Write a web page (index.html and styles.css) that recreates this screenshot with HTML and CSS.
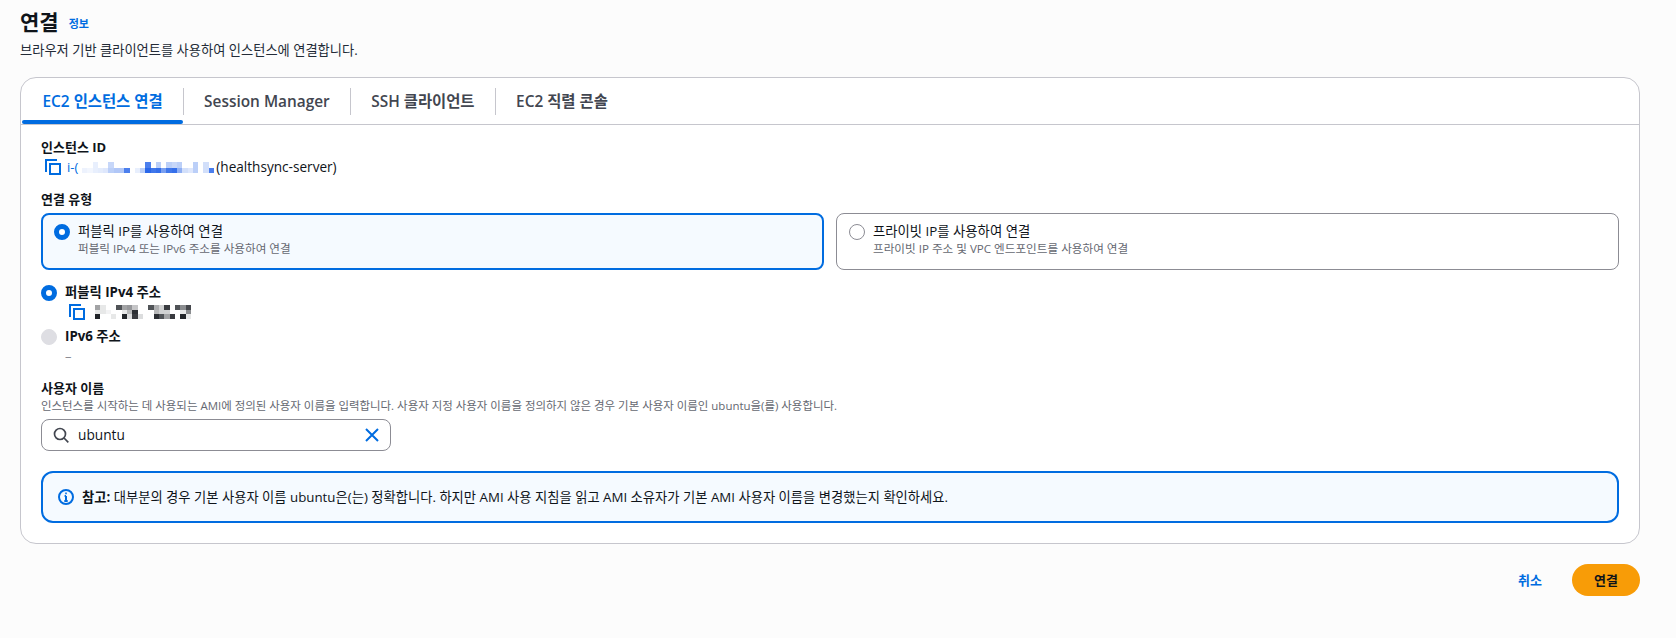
FILE: index.html
```html
<!DOCTYPE html>
<html lang="ko">
<head>
<meta charset="utf-8">
<title>연결</title>
<link rel="stylesheet" href="styles.css">
</head>
<body>
<main class="page">
  <header class="head">
    <div class="title-row"><h1>연결</h1><a class="info">정보</a></div>
    <p class="subtitle">브라우저 기반 클라이언트를 사용하여 인스턴스에 연결합니다.</p>
  </header>
  <section class="card">
    <nav class="tabs">
      <a class="tab active">EC2 인스턴스 연결</a>
      <a class="tab">Session Manager</a>
      <a class="tab">SSH 클라이언트</a>
      <a class="tab last">EC2 직렬 콘솔</a>
    </nav>
    <div class="body">
      <div class="field-id">
        <div class="label">인스턴스 ID</div>
        <div class="copy-row">
          <svg class="copy" viewBox="0 0 16 16"><path d="M1 13V1h11"/><rect x="5" y="5" width="10" height="10"/></svg>
          <span class="link">i-(</span>
          <svg class="mask mask-id" viewBox="0 0 25 2" preserveAspectRatio="none" shape-rendering="crispEdges">
            <g fill="#1f5fe8">
              <rect x="2" y="0" width="1" height="1" opacity=".1"/><rect x="5" y="0" width="1" height="1" opacity=".25"/><rect x="12" y="0" width="1" height="1" opacity=".8"/>
              <rect x="14" y="0" width="1" height="1" opacity=".3"/><rect x="16" y="0" width="1" height="1" opacity=".3"/><rect x="17" y="0" width="1" height="1" opacity=".25"/>
              <rect x="18" y="0" width="1" height="1" opacity=".3"/><rect x="21" y="0" width="1" height="1" opacity=".3"/><rect x="23" y="0" width="1" height="1" opacity=".2"/>
              <rect x="0" y="1" width="1" height="1" opacity=".08"/><rect x="1" y="1" width="1" height="1" opacity=".06"/><rect x="2" y="1" width="1" height="1" opacity=".1"/>
              <rect x="3" y="1" width="1" height="1" opacity=".12"/><rect x="4" y="1" width="1" height="1" opacity=".15"/><rect x="5" y="1" width="1" height="1" opacity=".3"/>
              <rect x="6" y="1" width="1" height="1" opacity=".35"/><rect x="7" y="1" width="1" height="1" opacity=".35"/><rect x="8" y="1" width="1" height="1" opacity=".8"/>
              <rect x="10" y="1" width="1" height="1" opacity=".1"/><rect x="11" y="1" width="1" height="1" opacity=".3"/><rect x="12" y="1" width="1" height="1" opacity=".95"/>
              <rect x="13" y="1" width="1" height="1" opacity=".85"/><rect x="14" y="1" width="1" height="1" opacity=".9"/><rect x="15" y="1" width="1" height="1" opacity=".6"/>
              <rect x="16" y="1" width="1" height="1" opacity=".85"/><rect x="17" y="1" width="1" height="1" opacity=".9"/><rect x="18" y="1" width="1" height="1" opacity=".5"/>
              <rect x="19" y="1" width="1" height="1" opacity=".2"/><rect x="20" y="1" width="1" height="1" opacity=".15"/><rect x="21" y="1" width="1" height="1" opacity=".3"/>
              <rect x="23" y="1" width="1" height="1" opacity=".2"/><rect x="24" y="1" width="1" height="1" opacity=".8"/>
            </g>
          </svg>
          <span class="server">(healthsync-server)</span>
        </div>
      </div>

      <div class="label type-label">연결 유형</div>
      <div class="choices">
        <div class="choice selected">
          <span class="radio on"></span>
          <div><div class="choice-title">퍼블릭 IP를 사용하여 연결</div><div class="choice-desc">퍼블릭 IPv4 또는 IPv6 주소를 사용하여 연결</div></div>
        </div>
        <div class="choice">
          <span class="radio"></span>
          <div><div class="choice-title">프라이빗 IP를 사용하여 연결</div><div class="choice-desc">프라이빗 IP 주소 및 VPC 엔드포인트를 사용하여 연결</div></div>
        </div>
      </div>

      <div class="addr">
        <div class="addr-row"><span class="radio on"></span><span class="label addr-label">퍼블릭 IPv4 주소</span></div>
        <div class="copy-row addr-value">
          <svg class="copy" viewBox="0 0 16 16"><path d="M1 13V1h11"/><rect x="5" y="5" width="10" height="10"/></svg>
          <svg class="mask mask-ip" viewBox="0 0 18 3" preserveAspectRatio="none" shape-rendering="crispEdges">
            <g fill="#16191f">
              <rect x="0" y="0" width="1" height="1" opacity=".4"/><rect x="1" y="0" width="1" height="1" opacity=".1"/><rect x="4" y="0" width="1" height="1" opacity=".75"/>
              <rect x="5" y="0" width="1" height="1" opacity=".4"/><rect x="6" y="0" width="1" height="1" opacity=".45"/><rect x="7" y="0" width="1" height="1" opacity=".25"/>
              <rect x="10" y="0" width="1" height="1" opacity=".75"/><rect x="11" y="0" width="1" height="1" opacity=".35"/><rect x="12" y="0" width="1" height="1" opacity=".2"/>
              <rect x="13" y="0" width="1" height="1" opacity=".85"/><rect x="15" y="0" width="1" height="1" opacity=".75"/><rect x="16" y="0" width="1" height="1" opacity=".5"/>
              <rect x="17" y="0" width="1" height="1" opacity=".8"/>
              <rect x="0" y="1" width="1" height="1" opacity=".1"/><rect x="1" y="1" width="1" height="1" opacity=".1"/><rect x="2" y="1" width="1" height="1" opacity=".05"/>
              <rect x="5" y="1" width="1" height="1" opacity=".1"/><rect x="6" y="1" width="1" height="1" opacity=".3"/><rect x="7" y="1" width="1" height="1" opacity=".9"/>
              <rect x="11" y="1" width="1" height="1" opacity=".3"/><rect x="12" y="1" width="1" height="1" opacity=".2"/><rect x="13" y="1" width="1" height="1" opacity=".2"/>
              <rect x="16" y="1" width="1" height="1" opacity=".1"/><rect x="17" y="1" width="1" height="1" opacity=".5"/>
              <rect x="0" y="2" width="1" height="1" opacity=".95"/><rect x="3" y="2" width="1" height="1" opacity=".1"/><rect x="5" y="2" width="1" height="1" opacity=".95"/>
              <rect x="6" y="2" width="1" height="1" opacity=".15"/><rect x="7" y="2" width="1" height="1" opacity=".85"/><rect x="8" y="2" width="1" height="1" opacity=".15"/>
              <rect x="11" y="2" width="1" height="1" opacity=".9"/><rect x="12" y="2" width="1" height="1" opacity=".75"/><rect x="13" y="2" width="1" height="1" opacity=".4"/>
              <rect x="14" y="2" width="1" height="1" opacity=".85"/><rect x="16" y="2" width="1" height="1" opacity=".95"/><rect x="17" y="2" width="1" height="1" opacity=".1"/>
            </g>
          </svg>
        </div>
        <div class="addr-row addr-v6"><span class="radio off"></span><span class="label addr-label">IPv6 주소</span></div>
        <div class="dash">–</div>
      </div>

      <div class="label user-label">사용자 이름</div>
      <div class="hint">인스턴스를 시작하는 데 사용되는 AMI에 정의된 사용자 이름을 입력합니다. 사용자 지정 사용자 이름을 정의하지 않은 경우 기본 사용자 이름인 ubuntu을(를) 사용합니다.</div>
      <div class="search">
        <svg class="search-icon" viewBox="0 0 16 16"><circle cx="7" cy="7" r="5.5"/><path d="M11 11l4.3 4.3"/></svg>
        <span class="search-text">ubuntu</span>
        <svg class="clear-icon" viewBox="0 0 16 16"><path d="M2 2l12 12M14 2L2 14"/></svg>
      </div>

      <div class="alert">
        <svg class="alert-icon" viewBox="0 0 16 16"><circle cx="8" cy="8" r="7"/><path d="M8 7v5M6.3 12h3.4M6.6 7H8"/><path class="dot" d="M7.2 3.6h1.6v1.6H7.2z"/></svg>
        <p><b>참고:</b> 대부분의 경우 기본 사용자 이름 ubuntu은(는) 정확합니다. 하지만 AMI 사용 지침을 읽고 AMI 소유자가 기본 AMI 사용자 이름을 변경했는지 확인하세요.</p>
      </div>
    </div>
  </section>
  <footer class="actions">
    <a class="cancel">취소</a>
    <button class="connect" type="button">연결</button>
  </footer>
</main>
</body>
</html>
```

FILE: styles.css
```css
* { box-sizing: border-box; }
html, body { margin: 0; height: 100%; }
body {
  background: #fcfcfc;
  color: #0f141a;
  font-family: "Open Sans", "Noto Sans CJK KR", sans-serif;
  font-size: 14px;
  line-height: 20px;
  overflow: hidden;
}
.page { padding: 6px 36px 0 20px; }
.title-row { display: flex; align-items: center; gap: 10px; height: 32px; }
h1 { margin: 0; font-size: 21px; line-height: 32px; font-weight: 700; }
.info { color: #006ce0; font-size: 11px; font-weight: 600; line-height: 16px; margin-top: 4px; }
.subtitle { margin: 2px 0 0; font-size: 13.25px; line-height: 20px; color: #232b37; }

.card {
  margin-top: 17px;
  height: 467px;
  background: #fff;
  border: 1px solid #c6c6cd;
  border-radius: 16px;
  overflow: hidden;
}
.tabs {
  display: flex;
  align-items: center;
  height: 47px;
  padding: 0 0 0 1px;
  border-bottom: 1px solid #c6c6cd;
}
.tab {
  position: relative;
  display: block;
  height: 46px;
  padding: 13px 21px 0 20.5px;
  font-size: 15.4px;
  line-height: 22px;
  font-weight: 600;
  color: #424650;
  white-space: nowrap;
}
.tab::after {
  content: "";
  position: absolute;
  right: 0;
  top: 10px;
  height: 27px;
  width: 1px;
  background: #c6c6cd;
}
.tab.last::after { display: none; }
.tab.active { color: #006ce0; }
.tab.active::before {
  content: "";
  position: absolute;
  left: 0;
  right: 1px;
  bottom: 0;
  height: 4px;
  border-radius: 2px;
  background: #006ce0;
}

.body { padding: 13px 20px 0; }
.label { font-size: 13px; line-height: 18px; font-weight: 700; color: #0f141a; }
.addr-label { font-size: 13.3px; }
.copy-row { display: flex; align-items: center; height: 20px; }
.copy { width: 16px; height: 16px; flex: none; fill: none; stroke: #006ce0; stroke-width: 2; }
.field-id .copy-row { padding-left: 4px; margin-top: 1px; }
.link { color: #006ce0; font-size: 13px; margin-left: 6px; }
.mask { display: block; flex: none; }
.mask-id { width: 132px; height: 11px; margin-left: 4px; }
.server { font-size: 13.6px; margin-left: 2px; }
.type-label { margin-top: 13px; }

.choices { display: flex; gap: 12px; margin-top: 5px; }
.choice {
  flex: 1;
  display: flex;
  gap: 8px;
  height: 57px;
  padding: 8px 12px;
  background: #fff;
  border: 1px solid #8c8c94;
  border-radius: 8px;
}
.choice.selected { background: #f5faff; border: 2px solid #006ce0; padding: 7px 11px; }
.radio {
  flex: none;
  width: 16px;
  height: 16px;
  margin-top: 2px;
  border-radius: 50%;
  background: #fff;
  border: 1px solid #8c8c94;
}
.radio.on { border: 5px solid #006ce0; }
.radio.off { background: #dedee3; border-color: #dedee3; }
.choice-title { font-size: 13.35px; line-height: 18px; }
.choice-desc { font-size: 11.6px; line-height: 16px; color: #656871; margin-top: 1px; }

.addr { margin-top: 13px; }
.addr-row { display: flex; align-items: flex-start; gap: 8px; height: 20px; }
.addr-row .radio { margin-top: 2px; }
.addr-value { padding-left: 28px; margin-top: -1px; }
.mask-ip { width: 96px; height: 14px; margin-left: 10px; }
.addr-v6 { margin-top: 5px; }
.dash { padding-left: 24px; height: 18px; line-height: 18px; font-size: 13px; color: #8c8c94; }

.user-label { margin-top: 14px; }
.hint { font-size: 11.46px; line-height: 16px; color: #656871; margin-top: 1px; }
.search {
  display: flex;
  align-items: center;
  width: 350px;
  height: 32px;
  margin-top: 5px;
  padding: 0 10px 0 11px;
  background: #fff;
  border: 1px solid #8c8c94;
  border-radius: 8px;
}
.search-icon { width: 16px; height: 16px; flex: none; fill: none; stroke: #424650; stroke-width: 1.7; }
.search-text { flex: 1; margin-left: 9px; font-size: 13.7px; }
.clear-icon { width: 16px; height: 16px; flex: none; fill: none; stroke: #006ce0; stroke-width: 2; }

.alert {
  display: flex;
  align-items: center;
  gap: 8px;
  height: 52px;
  margin-top: 20px;
  padding: 0 15px;
  background: #f5faff;
  border: 2px solid #006ce0;
  border-radius: 12px;
}
.alert p { margin: 0; font-size: 13.3px; line-height: 20px; }
.alert-icon { width: 16px; height: 16px; flex: none; fill: none; stroke: #006ce0; stroke-width: 2; }
.alert-icon .dot { fill: #006ce0; stroke: none; }

.actions { display: flex; justify-content: flex-end; align-items: center; gap: 30px; margin-top: 20px; }
.cancel { color: #006ce0; font-size: 13px; font-weight: 700; }
.connect {
  width: 68px;
  height: 32px;
  border: 0;
  border-radius: 16px;
  background: #f89c07;
  color: #0f141a;
  font: 700 13px/20px "Open Sans", "Noto Sans CJK KR", sans-serif;
}
```
